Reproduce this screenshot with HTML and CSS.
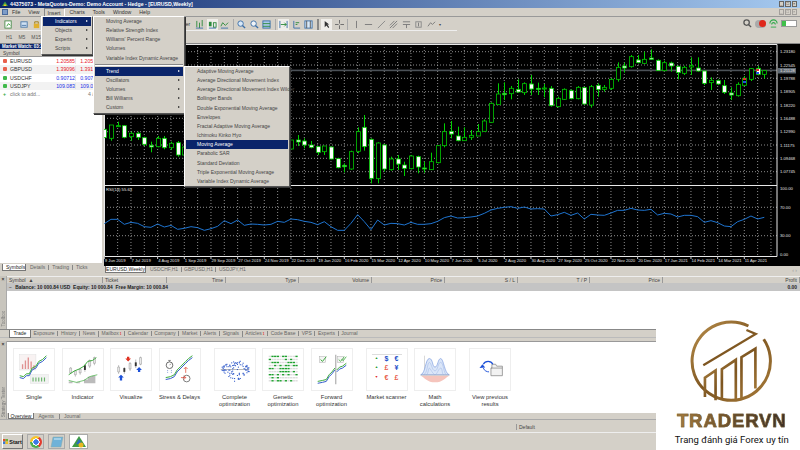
FILE: index.html
```html
<!DOCTYPE html>
<html lang="en">
<head>
    <meta charset="UTF-8">
    <meta name="viewport" content="width=device-width, initial-scale=1.0">
    <title>MetaQuotes-Demo</title>
    <link rel="stylesheet" href="styles.css">
</head>
<body>
    <div class="titlebar">
        <svg class="app-icon" viewBox="0 0 8 7"><path d="M0 6 4 0l4 6z" fill="#3f9a45"/><path d="M2 6 4 3l2 3z" fill="#f0c419"/></svg>
        <span class="title-text">44375073 - MetaQuotes-Demo: Demo Account - Hedge - [EURUSD,Weekly]</span>
        <div class="win-btns">
            <span class="win-btn">_</span><span class="win-btn">&#9633;</span><span class="win-btn">&times;</span>
        </div>
    </div>

    <div class="menubar">
        <span class="menu-logo"></span>
        <span class="menu-item m-file">File</span>
        <span class="menu-item">View</span>
        <span class="menu-item m-insert">Insert</span>
        <span class="menu-item">Charts</span>
        <span class="menu-item">Tools</span>
        <span class="menu-item">Window</span>
        <span class="menu-item">Help</span>
        <div class="win-btns faded">
            <span class="win-btn">_</span><span class="win-btn">&#9633;</span><span class="win-btn">&times;</span>
        </div>
    </div>

    <div class="toolbars">
        <div class="toolbar-row">
            <div class="tb-left">
                <svg class="tb-icon" viewBox="0 0 10 10"><rect x="1" y="1" width="7" height="8" fill="#fff" stroke="#4a8a4a"/><path d="M3 7 5 4l2 2" fill="none" stroke="#2a9a2a"/></svg>
                <svg class="tb-icon tb-icon-gap" viewBox="0 0 10 10"><rect x="1" y="2" width="7" height="6" fill="#cfe0f2" stroke="#4a78a8"/><path d="M2 6h5" stroke="#4a78a8"/></svg>
                <svg class="tb-icon" viewBox="0 0 10 10"><rect x="2" y="4" width="6" height="5" fill="#e0b030"/><path d="M3 4V2h4v2" fill="none" stroke="#a07a10"/></svg>
            </div>
            <span class="order-text">der</span>
            <div class="tb-group">
                <svg class="tb-icon" viewBox="0 0 10 10"><path d="M2 1v7M5 3v6M8 0v7" stroke="#2c8a3c"/><path d="M1 9h8" stroke="#3a6ea8"/></svg>
                <svg class="tb-icon on" viewBox="0 0 10 10"><rect x="1" y="2" width="3" height="5" fill="#2c8a3c"/><rect x="6" y="3" width="3" height="5" fill="#e8e8e8" stroke="#2c8a3c"/><path d="M1 9h8" stroke="#3a6ea8"/></svg>
                <svg class="tb-icon" viewBox="0 0 10 10"><path d="M1 7 3 3l3 3 3-3" fill="none" stroke="#2c8a3c"/><path d="M1 9h8" stroke="#3a6ea8"/></svg>
                <i class="tb-sep"></i>
                <svg class="tb-icon" viewBox="0 0 10 10"><circle cx="4" cy="4" r="3" fill="#d8e8f8" stroke="#3a6ea8"/><path d="m6 6 3 3" stroke="#3a6ea8" stroke-width="1.5"/></svg>
                <svg class="tb-icon" viewBox="0 0 10 10"><circle cx="4" cy="4" r="3" fill="#f0f4f8" stroke="#3a6ea8"/><path d="m6 6 3 3" stroke="#3a6ea8" stroke-width="1.5"/></svg>
                <svg class="tb-icon" viewBox="0 0 10 10"><rect x="1" y="1" width="8" height="8" fill="#a8c8e8" stroke="#3a6ea8"/><path d="M1 4h8M1 7h8" stroke="#2c8a3c"/></svg>
                <i class="tb-sep"></i>
                <svg class="tb-icon on" viewBox="0 0 10 10"><path d="M1 1v8M9 1v8" stroke="#3a6ea8"/><path d="M2 5h6M6 3l2 2-2 2" fill="none" stroke="#2c8a3c"/></svg>
                <svg class="tb-icon" viewBox="0 0 10 10"><path d="M2 1v8h7" fill="none" stroke="#3a6ea8"/><path d="M4 3h4M4 5h2" stroke="#2c8a3c"/></svg>
                <svg class="tb-icon" viewBox="0 0 10 10"><rect x="1" y="1" width="8" height="8" fill="#d8e8f8" stroke="#3a6ea8"/><path d="M3 1v8M7 1v8" stroke="#555"/></svg>
                <i class="tb-sep wide"></i>
                <svg class="tb-icon on" viewBox="0 0 10 10"><path d="M3 1v7l2-2 2 3 1-1-2-3h2z" fill="#333"/></svg>
                <svg class="tb-icon" viewBox="0 0 10 10"><path d="M5 0v4M5 6v4M0 5h4M6 5h4" stroke="#666"/></svg>
                <i class="tb-sep"></i>
                <svg class="tb-icon" viewBox="0 0 10 10"><path d="M5 1v8" stroke="#777"/></svg>
                <svg class="tb-icon" viewBox="0 0 10 10"><path d="M1 5h8" stroke="#777"/></svg>
                <svg class="tb-icon" viewBox="0 0 10 10"><path d="m1 9 8-8" stroke="#888"/></svg>
                <svg class="tb-icon" viewBox="0 0 10 10"><path d="m1 9 8-8M1 6l5-5M4 9l5-5" stroke="#777"/></svg>
                <svg class="tb-icon" viewBox="0 0 10 10"><path d="M1 2h8M1 5h8M5 5v4" stroke="#777"/></svg>
                <svg class="tb-icon" viewBox="0 0 10 10"><rect x="2" y="2" width="6" height="6" fill="none" stroke="#888"/><path d="M5 3v4" stroke="#777"/></svg>
                <svg class="tb-icon" viewBox="0 0 10 10"><path d="M1 7 4 3l2 2 3-3" fill="none" stroke="#777"/></svg>
                <span class="tb-drop">&#9662;</span>
            </div>
            <div class="tb-status">
                <svg class="tb-icon" viewBox="0 0 10 10"><circle cx="4" cy="4" r="3" fill="none" stroke="#555" stroke-width="1.4"/><path d="m6 6 3 3" stroke="#555" stroke-width="1.5"/></svg>
                <span class="bell"><i class="bell-badge"></i></span>
                <svg class="tb-icon" viewBox="0 0 10 10"><path d="M1 5a4 4 0 0 1 8 0M3 6a2 2 0 0 1 4 0" fill="none" stroke="#2faa4a" stroke-width="1.2"/><path d="M2 9h6" stroke="#2faa4a"/></svg>
                <span class="signal"><i class="signal-fill"></i></span>
            </div>
        </div>
        <div class="toolbar-row second">
            <span class="tf">H1</span><span class="tf">M5</span><span class="tf">M15</span>
        </div>
    </div>

    <div class="workspace">
        <aside class="market-watch">
            <div class="mw-title">Market Watch: 03:26:41</div>
            <div class="mw-head"><span>Symbol</span></div>
            <div class="mw-row"><i class="arrow down"></i><span class="mw-sym">EURUSD</span><span class="mw-bid red">1.20585</span><span class="mw-ask red">1.20593</span></div>
            <div class="mw-row alt"><i class="arrow down"></i><span class="mw-sym">GBPUSD</span><span class="mw-bid red">1.39096</span><span class="mw-ask red">1.39104</span></div>
            <div class="mw-row"><i class="arrow up"></i><span class="mw-sym">USDCHF</span><span class="mw-bid blue">0.90712</span><span class="mw-ask blue">0.90720</span></div>
            <div class="mw-row alt"><i class="arrow up"></i><span class="mw-sym">USDJPY</span><span class="mw-bid blue">109.083</span><span class="mw-ask blue">109.091</span></div>
            <div class="mw-row add"><span class="plus">+</span><span class="mw-sym">click to add...</span><span class="mw-count">4 / 7</span></div>
            <div class="mw-spacer"></div>
            <div class="tabs mw-tabs">
                <span class="tab active">Symbols</span><span class="tab">Details</span><span class="tab">Trading</span><span class="tab">Ticks</span>
            </div>
        </aside>

        <main class="chart-area">
            <svg id="chart" class="chart" viewBox="104 44 696 222"></svg>
            <div class="tabs chart-tabs">
                <span class="tab active">EURUSD,Weekly</span><span class="tab">USDCHF,H1</span><span class="tab">GBPUSD,H1</span><span class="tab">USDJPY,H1</span>
                <span class="scroll-arrows">&lsaquo; &rsaquo;</span>
            </div>
        </main>
    </div>

    <section class="terminal">
        <div class="gutter"><span class="gutter-x">&times;</span><span class="gutter-label">Toolbox</span></div>
        <div class="terminal-main">
            <div class="order-head">
                <span class="col-left">Symbol &nbsp;&#9650;</span><span class="col-left">Ticket</span><span>Time</span><span>Type</span><span>Volume</span><span>Price</span><span>S / L</span><span>T / P</span><span>Price</span><span>Profit</span>
            </div>
            <div class="balance-row">
                <span class="balance-text"><span class="collapse">&minus;</span> Balance: 10 000.84 USD&nbsp; Equity: 10 000.84&nbsp; Free Margin: 10 000.84</span>
                <span class="balance-profit">0.00</span>
            </div>
            <div class="order-body"></div>
        </div>
    </section>
    <div class="tabs terminal-tabs">
        <span class="tab active">Trade</span><span class="tab">Exposure</span><span class="tab">History</span><span class="tab">News</span><span class="tab">Mailbox<b class="tick">1</b></span><span class="tab">Calendar</span><span class="tab">Company</span><span class="tab">Market</span><span class="tab">Alerts</span><span class="tab">Signals</span><span class="tab">Articles<b class="tick">1</b></span><span class="tab">Code Base</span><span class="tab">VPS</span><span class="tab">Experts</span><span class="tab">Journal</span>
    </div>

    <section class="tester">
        <div class="gutter"><span class="gutter-x">&times;</span><span class="gutter-label">Strategy Tester</span></div>
        <div class="tester-main">
            <div class="tiles">
                <div class="tile">
                    <svg class="tile-card" viewBox="0 0 42 43">
                        <rect x="6" y="6" width="17" height="16" fill="#f8f2f2" stroke="#ddd" stroke-width=".5"/>
                        <path d="M9 21v-5M12 21v-9M15 21V9M18 21v-8M21 21v-4" stroke="#e09090" stroke-width="1.4"/>
                        <rect x="17" y="27" width="19" height="9" fill="#f2f2f2" stroke="#ddd" stroke-width=".5"/>
                        <path d="M20 34v-4M23 34v-4M26 34v-4M29 34v-4M32 34v-4" stroke="#6cb46c" stroke-width="1.2"/>
                        <path d="M6 30l4 1 3-3 3 0 3-6 4-2 3-5 4-2 4-4" fill="none" stroke="#2a55c8"/>
                        <path d="M6 28l4 1 3-3 3 0 3-6 4-2 3-5 4-2 4-4" fill="none" stroke="#35a835"/>
                    </svg>
                    <span class="tile-name">Single</span>
                </div>
                <div class="tile">
                    <svg class="tile-card" viewBox="0 0 42 43">
                        <path d="M8 19v7M13 22v7M18 20v7M23 16v8M28 11v9M33 8v9" stroke="#999" stroke-width=".6"/>
                        <path d="M7 20h2v5H7zM12 23h2v4h-2zM17 21h2v4h-2zM27 12h2v6h-2zM32 9h2v6h-2z" fill="#eee" stroke="#888" stroke-width=".5"/>
                        <rect x="22" y="17" width="2" height="5" fill="#333"/>
                        <path d="M6 27l6-4 5-2 5-3 4-5 5-1 4-3" fill="none" stroke="#35a835"/>
                        <path d="M6 34h4v2h4v-1h4v1h4l0-4h4v-3h4v-1h4v8H6z" fill="#bbb"/>
                        <path d="M6 33l8 2 8-2 6-4 8-2" fill="none" stroke="#35a835" stroke-width=".7"/>
                    </svg>
                    <span class="tile-name">Indicator</span>
                </div>
                <div class="tile">
                    <svg class="tile-card" viewBox="0 0 42 43">
                        <path d="M8 17v9M14 19v7M20 14v9M26 11v9M31 8v9" stroke="#888" stroke-width=".6"/>
                        <path d="M7 19h2v5H7zM19 15h2v6h-2zM30 9h2v7h-2z" fill="#eee" stroke="#888" stroke-width=".5"/>
                        <rect x="13" y="20" width="2" height="4" fill="#333"/><rect x="25" y="14" width="2" height="4" fill="#333"/>
                        <path d="m18 13-3-3h1.800V8h2.400v2H21z" fill="#e03020"/>
                        <path d="m11 27-3 3h1.800v3h2.400v-3H14zM30 19l-3 3h1.800v2h2.400v-2H33z" fill="#1c50d8" transform="translate(-.5 0)"/>
                    </svg>
                    <span class="tile-name">Visualize</span>
                </div>
                <div class="tile">
                    <svg class="tile-card" viewBox="0 0 42 43">
                        <circle cx="10" cy="17" r="3.500" fill="#fff" stroke="#666"/><path d="M10 12v1.500M8.500 12h3M10 17l1.500-1.500" stroke="#666" stroke-width=".7"/>
                        <path d="M8 22v3M12 22v3" stroke="#88a0d8" stroke-dasharray="1 1"/>
                        <path d="M6 32l5-1 4-2 3-5 4-4 5-5 3-3 4-3" fill="none" stroke="#2a55c8"/>
                        <path d="M6 30l5-1 4-2 3-5 4-4 5-5 3-3 4-3" fill="none" stroke="#35a835"/>
                        <path d="M27 19v6M25 21l2-2 2 2" fill="none" stroke="#e87060"/>
                        <circle cx="28" cy="31" r="3.500" fill="#fff" stroke="#777"/><path d="M22 30h5M25 28l2 2-2 2" fill="none" stroke="#e03020" stroke-width=".7"/>
                    </svg>
                    <span class="tile-name">Stress &amp; Delays</span>
                </div>
                <div class="tile wide">
                    <svg id="scatter" class="tile-card" viewBox="0 0 42 43"></svg>
                    <span class="tile-name">Complete<br>optimization</span>
                </div>
                <div class="tile">
                    <svg id="genetic" class="tile-card" viewBox="0 0 42 43"></svg>
                    <span class="tile-name">Genetic<br>optimization</span>
                </div>
                <div class="tile">
                    <svg class="tile-card" viewBox="0 0 42 43">
                        <rect x="8" y="8" width="6" height="6" fill="#f4f4f4" stroke="#aaa" stroke-width=".5"/><path d="m9 11 2 2 4-5" fill="none" stroke="#35a835"/>
                        <rect x="27" y="8" width="6" height="6" fill="#f4f4f4" stroke="#aaa" stroke-width=".5"/><path d="m28 11 2 2 4-5M31 11l2 1 3-4" fill="none" stroke="#35a835" stroke-width=".8"/>
                        <path d="M25 6v31" stroke="#999"/>
                        <path d="M6 36l5-1 4-1 3-5 3-3 3-4M26 24l3-3 3-1 4-3" fill="none" stroke="#2a55c8"/>
                        <path d="M6 34l5-1 4-1 3-5 3-3 3-4M26 22l3-3 3-1 4-3" fill="none" stroke="#35a835"/>
                    </svg>
                    <span class="tile-name">Forward<br>optimization</span>
                </div>
                <div class="tile wide">
                    <div class="tile-card scanner">
                        <span class="up">&#9650;</span><span class="cur-blue">$</span><span class="cur-blue">&euro;</span>
                        <span class="up">&#9650;</span><span class="cur-red">&pound;</span><span class="cur-blue">&yen;</span>
                        <span class="down">&#9660;</span><span class="cur-red">&euro;</span><span class="cur-red">&pound;</span>
                    </div>
                    <span class="tile-name">Market scanner</span>
                </div>
                <div class="tile">
                    <svg class="tile-card" viewBox="0 0 42 43">
                        <path d="M10 7v20" stroke="#bbb" stroke-width=".6"/>
                        <path d="M6 27c5-1 5-17 9-17s3 9 6 9 3-9 6-9 4 16 9 17z" fill="#dbe6f8" stroke="#7a9ade" stroke-width=".7"/>
                        <path d="M9 27c4-1 4-13 6-13s3 9 6 9 3-9 6-9 3 12 6 13M12 27c2-1 2-7 3-7s4 7 6 7 4-7 6-7 1 6 3 7" fill="none" stroke="#9ab2e6" stroke-width=".5"/>
                        <path d="M6 28h30c-4 2-7 7-15 7S10 30 6 28z" fill="#f5c4bc"/>
                        <path d="M6 27.500h30" stroke="#aaa" stroke-width=".6"/>
                    </svg>
                    <span class="tile-name">Math<br>calculations</span>
                </div>
                <div class="tile wide">
                    <svg class="tile-card" viewBox="0 0 42 43">
                        <path d="M22 20h12v-2h-6l-1-2h-4v4zM22 20v8h12v-8" fill="#f2f2f2" stroke="#888" stroke-width=".8"/>
                        <path d="M24 16c-2-4-8-4-10 0" fill="none" stroke="#1c50d8" stroke-width="1.200"/>
                        <path d="M14 20c1 3 4 4 6 4" fill="none" stroke="#1c50d8"/>
                        <path d="m10 20 3-4 3 3.500z" fill="#1c50d8"/>
                    </svg>
                    <span class="tile-name">View previous<br>results</span>
                </div>
            </div>
            <div class="tabs tester-tabs">
                <span class="tab active">Overview</span><span class="tab">Agents</span><span class="tab">Journal</span>
            </div>
        </div>
    </section>

    <div class="statusbar"><span class="status-cell">Default</span></div>

    <footer class="taskbar">
        <span class="start">
            <svg class="flag" viewBox="0 0 6 6"><path d="M0 0h3v3H0z" fill="#e0502a"/><path d="M3 0h3v3H3z" fill="#6cb03a"/><path d="M0 3h3v3H0z" fill="#3a7ad8"/><path d="M3 3h3v3H3z" fill="#f0c020"/></svg>
            Start
        </span>
        <span class="task"><i class="chrome"></i></span>
        <span class="task"><svg class="task-svg" viewBox="0 0 14 12"><path d="M3 1h10l-2 10H1z" fill="#6fb2d8" stroke="#8aa" stroke-width=".5"/><path d="M4 3h7" stroke="#d8eef8"/></svg></span>
        <span class="task current"><svg class="task-svg" viewBox="0 0 14 12"><path d="M7 0 14 11H0z" fill="#3f9a45"/><path d="M7 3l3 5H4z" fill="#2a6cc0"/><circle cx="9" cy="9" r="2.500" fill="#e8b820"/></svg></span>
    </footer>

    <div class="menu menu-insert">
        <div class="menu-row selected">Indicators<i class="caret"></i></div>
        <div class="menu-row">Objects<i class="caret"></i></div>
        <div class="menu-row">Experts<i class="caret"></i></div>
        <div class="menu-row">Scripts<i class="caret"></i></div>
    </div>
    <div class="menu menu-indicators">
        <div class="menu-row">Moving Average</div>
        <div class="menu-row">Relative Strength Index</div>
        <div class="menu-row">Williams' Percent Range</div>
        <div class="menu-row">Volumes</div>
        <div class="menu-row">Variable Index Dynamic Average</div>
        <hr class="menu-sep">
        <div class="menu-row selected">Trend<i class="caret"></i></div>
        <div class="menu-row">Oscillators<i class="caret"></i></div>
        <div class="menu-row">Volumes<i class="caret"></i></div>
        <div class="menu-row">Bill Williams<i class="caret"></i></div>
        <div class="menu-row">Custom<i class="caret"></i></div>
    </div>
    <div class="menu menu-trend">
        <div class="menu-row">Adaptive Moving Average</div>
        <div class="menu-row">Average Directional Movement Index</div>
        <div class="menu-row">Average Directional Movement Index Wilder</div>
        <div class="menu-row">Bollinger Bands</div>
        <div class="menu-row">Double Exponential Moving Average</div>
        <div class="menu-row">Envelopes</div>
        <div class="menu-row">Fractal Adaptive Moving Average</div>
        <div class="menu-row">Ichimoku Kinko Hyo</div>
        <div class="menu-row selected">Moving Average</div>
        <div class="menu-row">Parabolic SAR</div>
        <div class="menu-row">Standard Deviation</div>
        <div class="menu-row">Triple Exponential Moving Average</div>
        <div class="menu-row">Variable Index Dynamic Average</div>
    </div>

    <div class="brand">
        <svg class="brand-mark" viewBox="0 0 250 250">
            <defs>
                <linearGradient id="gold" x1="0" y1="0" x2="1" y2="1">
                    <stop offset="0" stop-color="#b98f4c"/>
                    <stop offset=".5" stop-color="#7d5520"/>
                    <stop offset="1" stop-color="#a87c3a"/>
                </linearGradient>
            </defs>
            <path d="M176 18A118 118 0 1 0 222 58" fill="none" stroke="url(#gold)" stroke-width="9"/>
            <path d="M40 136 198 42 170 30" fill="none" stroke="url(#gold)" stroke-width="7"/>
            <path d="M45 232v-58l32-22v90M96 240v-92l42-28v120M155 236V112l42-26v120" fill="none" stroke="url(#gold)" stroke-width="8"/>
        </svg>
        <div class="brand-name">TRADERVN</div>
        <div class="brand-tag">Trang đánh giá Forex uy tín</div>
    </div>

    <script src="chart.js"></script>
</body>
</html>
```

FILE: styles.css
```css
* {
    box-sizing: border-box;
}

body {
    font-family: "Liberation Sans", Arial, sans-serif;
    font-size: 5px;
    color: #444;
    background: #d4d0c8;
    width: 800px;
    height: 450px;
    margin: 0;
    position: relative;
    overflow: hidden;
}

/* window chrome */
.titlebar {
    height: 8px;
    display: flex;
    align-items: center;
    padding-left: 2px;
    background: linear-gradient(90deg, #0a246a, #a6caf0);
    color: #fff;
    font-weight: bold;
    font-size: 5.2px;
}

.app-icon {
    width: 6px;
    height: 6px;
    margin-right: 2px;
}

.title-text {
    flex: 1;
}

.win-btns {
    display: flex;
    gap: 1px;
    margin-right: 3px;
}

.win-btn {
    width: 5.5px;
    height: 6px;
    background: #d4d0c8;
    border: 1px solid #666;
    color: #222;
    font-size: 4px;
    line-height: 4px;
    text-align: center;
    font-weight: normal;
}

.win-btns.faded {
    margin-left: auto;
    opacity: .45;
}

.menubar {
    height: 9px;
    display: flex;
    align-items: center;
    border-bottom: 1px solid #999;
    font-size: 5.2px;
    color: #333;
}

.menu-logo {
    width: 6px;
    height: 6px;
    margin-left: 2px;
    background: #7d9cc8;
    border: 1px solid #4a6a9c;
}

.menu-item {
    margin-left: 8px;
}

.m-file {
    margin-left: 4px;
}

.m-insert {
    margin-left: 4px;
    margin-right: -3px;
    padding: 0 3px;
    height: 8px;
    line-height: 8px;
    border-top: 1px solid #888;
    border-left: 1px solid #888;
    border-right: 1px solid #fff;
}

.toolbars {
    height: 27px;
    border-bottom: 1px solid #888;
}

.toolbar-row {
    height: 14px;
    display: flex;
    align-items: center;
    position: relative;
    background: linear-gradient(#eee, #eee) left bottom / 457px 1px no-repeat;
}

.toolbar-row.second {
    height: 12px;
    padding-left: 6px;
    gap: 6px;
    background: none;
    color: #555;
}

.tb-left {
    display: flex;
    width: 183px;
    padding-left: 4px;
    gap: 3px;
}

.order-text {
    width: 12px;
    color: #333;
}

.tb-group {
    width: 262px;
    display: flex;
    align-items: center;
    gap: 3.5px;
}

.tb-icon {
    width: 9px;
    height: 9px;
    flex: none;
}

.tb-icon.on {
    background: #f0eeea;
    outline: 1.5px solid #f0eeea;
}

.tb-icon-gap {
    margin-left: 4px;
}

.tb-sep {
    width: 1px;
    height: 11px;
    background: #aaa;
}

.tb-sep.wide {
    width: 2px;
    background: #888;
}

.tb-drop {
    font-size: 4px;
}

.tb-status {
    position: absolute;
    right: 3px;
    top: 2px;
    display: flex;
    align-items: center;
    gap: 3px;
}

.bell {
    width: 11px;
    height: 8px;
    border-radius: 4px;
    background: #aaa;
    position: relative;
}

.bell-badge {
    position: absolute;
    right: 0;
    top: 0;
    width: 7px;
    height: 7px;
    border-radius: 50%;
    background: #e0281c;
}

.signal {
    width: 16px;
    height: 7px;
    background: #fff;
    border: 1px solid #999;
    display: block;
}

.signal-fill {
    display: block;
    width: 4px;
    height: 100%;
    background: #3fc04a;
}

/* market watch */
.workspace {
    height: 232px;
    display: flex;
}

.market-watch {
    width: 102px;
    margin-right: 2px;
    display: flex;
    flex-direction: column;
}

.mw-title {
    height: 5px;
    background: #0a246a;
    color: #fff;
    font-weight: bold;
    font-size: 4.5px;
    line-height: 5px;
    padding-left: 2px;
    flex: none;
}

.mw-head {
    height: 8px;
    line-height: 8px;
    background: #d4d0c8;
    padding-left: 3px;
    border-bottom: 1px solid #999;
    flex: none;
}

.mw-row {
    height: 8.3px;
    flex: none;
    display: flex;
    align-items: center;
    padding-left: 3px;
    font-size: 5.2px;
    color: #333;
    background: #fff;
}

.mw-row.alt {
    background: #f2f2f2;
}

.arrow {
    width: 4px;
    height: 4px;
    margin-right: 3px;
    border-radius: 1px;
}

.arrow.down {
    background: #e8604c;
}

.arrow.up {
    background: #3fb94a;
}

.plus {
    color: #2fa83a;
    font-weight: bold;
    width: 7px;
}

.mw-sym {
    width: 41px;
}

.mw-bid,
.mw-ask {
    width: 24px;
    text-align: right;
    overflow: hidden;
    white-space: nowrap;
}

.mw-ask {
    border-left: 1px solid #e4e4e4;
}

.red {
    color: #e8202a;
}

.blue {
    color: #1c30e8;
}

.add .mw-sym {
    color: #777;
    width: 78px;
}

.mw-count {
    color: #777;
}

.mw-spacer {
    flex: 1;
    background: #fff;
}

.tabs {
    display: flex;
    align-items: center;
    background: #d4d0c8;
    color: #666;
    white-space: nowrap;
}

.tab {
    padding: 0 3.5px;
    border-left: 1px solid #888;
    line-height: 5px;
}

.tab.active {
    background: #fff;
    color: #222;
    border: 1px solid #777;
    border-top: none;
    line-height: 6px;
}

.tab.active + .tab {
    border-left: none;
}

.mw-tabs {
    height: 9px;
    margin-bottom: 4px;
    padding: 0 1px 1px 2px;
    flex: none;
}

.mw-tabs .tab {
    padding: 0 3px;
}

.mw-tabs .tab.active {
    width: 24px;
    text-align: center;
}

.mw-tabs .tab.active + .tab {
    margin-left: 1px;
}

/* chart */
.chart-area {
    flex: 1;
    display: flex;
    flex-direction: column;
}

.chart {
    display: block;
    width: 696px;
    height: 222px;
    flex: none;
    background: #000;
}

.chart text {
    font-family: "Liberation Sans", Arial, sans-serif;
    font-size: 4.2px;
    fill: #e4e4e4;
}

.chart-tabs {
    height: 10px;
    padding-left: 1px;
    padding-bottom: 3px;
}

.chart-tabs .tab {
    padding: 0 2.5px;
}

.chart-tabs .tab.active {
    width: 41px;
    height: 7px;
    padding: 0;
    text-align: center;
}

.chart-tabs .tab.active + .tab {
    margin-left: 1.5px;
}

.scroll-arrows {
    margin-left: auto;
    margin-right: 3px;
    color: #999;
}

/* toolbox */
.terminal {
    height: 53px;
    display: flex;
}

.gutter {
    width: 7px;
    flex: none;
    position: relative;
    background: #c8c5bd;
    display: flex;
    flex-direction: column;
    align-items: center;
    border-right: 1px solid #aaa;
}

.gutter-x {
    font-size: 5px;
    font-weight: bold;
    color: #333;
    height: 7px;
}

.gutter-label {
    writing-mode: vertical-rl;
    transform: rotate(180deg);
    color: #777;
    font-size: 4.5px;
    margin-top: auto;
    margin-bottom: 2px;
}

.terminal-main {
    flex: 1;
    display: flex;
    flex-direction: column;
}

.order-head {
    display: grid;
    grid-template-columns: 96px 64px 59px 73px 73px 73px 73px 72px 73px 1fr;
    height: 7px;
    flex: none;
    line-height: 7px;
    border-top: 1px solid #eee;
}

.order-head span {
    text-align: right;
    padding: 0 2px;
    border-right: 1px solid #999;
}

.order-head .col-left {
    text-align: left;
}

.balance-row {
    height: 8px;
    flex: none;
    display: flex;
    justify-content: space-between;
    align-items: center;
    background: #c4c4c4;
    padding: 0 3px 0 2px;
    color: #222;
    font-weight: bold;
    font-size: 4.9px;
}

.collapse {
    color: #555;
    margin-right: 2px;
}

.order-body {
    flex: 1;
    background: #fff;
}

.terminal-tabs {
    height: 9px;
    padding-left: 9px;
    background: #d4d0c8;
    border-top: 1px solid #888;
    border-bottom: 1px solid #bbb;
    width: 800px;
}

.terminal-tabs .tab {
    padding: 0 2.65px;
}

.terminal-tabs .tab.active {
    padding: 0 3.5px;
    height: 8px;
}

.tick {
    color: #e02020;
    font-size: 3px;
    margin-left: 1px;
}

/* strategy tester */
.tester {
    height: 81px;
    display: flex;
    padding-top: 3px;
}

.tester-main {
    flex: 1;
    display: flex;
    flex-direction: column;
}

.tiles {
    flex: 1;
    display: flex;
    background: #fff;
    padding: 6px 0 0 6px;
    border-top: 1px solid #999;
}

.tile {
    width: 42px;
    margin-right: 6.5px;
    flex: none;
    text-align: center;
    color: #333;
    font-size: 5.8px;
}

.tile.wide {
    margin-left: 6.5px;
}

.tile-card {
    display: block;
    width: 42px;
    height: 43px;
    background: #fff;
    border: 1px solid #eee;
    margin-bottom: 3px;
}

.tile-name {
    display: block;
    line-height: 7px;
    margin: 0 -3px;
    white-space: nowrap;
}

.scanner {
    display: grid;
    grid-template-columns: repeat(3, 1fr);
    align-items: center;
    text-align: center;
    padding: 5px 5px 8px;
    font-size: 7px;
    font-weight: bold;
    line-height: 9px;
    background-image: linear-gradient(#ddd, #ddd);
    background-size: 30px 1px;
    background-position: 5px 5px;
    background-repeat: no-repeat;
}

.scanner .up {
    color: #1c9a30;
    font-size: 3.5px;
}

.scanner .down {
    color: #e02a2a;
    font-size: 3.5px;
}

.cur-blue {
    color: #1c50c8;
}

.cur-red {
    color: #e8604c;
}

.tester-tabs {
    height: 6px;
    flex: none;
    padding-left: 1px;
}

.tester-tabs .tab {
    padding: 0 4.5px;
}

.tester-tabs .tab.active {
    width: 26px;
    height: 6px;
    padding: 0;
    text-align: center;
}

.statusbar {
    height: 13px;
    padding-top: 2px;
    border-top: 1px solid #aaa;
    display: flex;
    align-items: center;
    color: #444;
}

.status-cell {
    margin-left: 516px;
    padding-left: 2px;
    border-left: 1px solid #999;
}

.taskbar {
    height: 18px;
    display: flex;
    align-items: center;
    padding-left: 2px;
    gap: 4px;
    border-top: 1px solid #eee;
}

.start {
    width: 21px;
    height: 15px;
    display: flex;
    align-items: center;
    justify-content: center;
    gap: 1px;
    font-weight: bold;
    font-size: 5.5px;
    color: #111;
    border: 1px solid #777;
    border-top-color: #fff;
    border-left-color: #fff;
}

.flag {
    width: 5px;
    height: 5px;
}

.task {
    width: 17px;
    height: 15px;
    display: flex;
    align-items: center;
    justify-content: center;
    background: #d4d0c8;
    border: 1px solid #aaa;
}

.task.current {
    width: 19px;
    background: #fff;
}

.chrome {
    width: 12px;
    height: 12px;
    border-radius: 50%;
    background: radial-gradient(circle, #3b78e7 0 2.5px, #fff 2.7px 3.5px, transparent 3.7px),
        conic-gradient(from 30deg, #e33b2e 0 120deg, #4caf50 120deg 240deg, #f7c52b 240deg);
}

.task-svg {
    width: 14px;
    height: 12px;
}

/* dropdown menus */
.menu {
    position: absolute;
    z-index: 5;
    background: #d4d0c8;
    border: 1px solid #fff;
    border-right-color: #555;
    border-bottom-color: #555;
    color: #444;
    padding: 0 1px;
    box-shadow: 1px 1px 0 #333;
}

.menu-row {
    height: 9.17px;
    line-height: 9.17px;
    padding-left: 11px;
    position: relative;
    white-space: nowrap;
}

.menu-row.selected {
    background: #0a246a;
    color: #fff;
}

.caret {
    position: absolute;
    right: 3px;
    top: 3px;
    border-left: 2.5px solid #222;
    border-top: 1.8px solid transparent;
    border-bottom: 1.8px solid transparent;
}

.menu-row.selected .caret {
    border-left-color: #fff;
}

.menu-sep {
    margin: 1px 0;
    border: none;
    border-top: 1px solid #888;
    border-bottom: 1px solid #fff;
}

.menu-insert {
    left: 41px;
    top: 16px;
    width: 52px;
}

.menu-insert .menu-row {
    padding-left: 12px;
}

.menu-indicators {
    left: 93px;
    top: 16px;
    width: 92px;
}

.menu-trend {
    left: 184px;
    top: 66px;
    width: 106px;
}

/* logo block over the bottom right */
.brand {
    position: absolute;
    z-index: 6;
    left: 656px;
    top: 320px;
    width: 144px;
    height: 130px;
    padding-left: 7.5px;
    background: #fff;
    display: flex;
    flex-direction: column;
    align-items: center;
}

.brand-mark {
    width: 83px;
    height: 83px;
    flex: none;
}

.brand-name {
    margin-top: 10px;
    font-size: 18.5px;
    font-weight: bold;
    letter-spacing: .9px;
    line-height: 15px;
    color: #6e5430;
    background: linear-gradient(90deg, #a67c3c, #5c4526 60%, #3a3024);
    -webkit-background-clip: text;
    background-clip: text;
    -webkit-text-fill-color: transparent;
    -webkit-text-stroke: .5px #7a5e36;
}

.brand-tag {
    margin-top: 6px;
    font-family: Roboto, "Liberation Sans", sans-serif;
    font-size: 9.5px;
    line-height: 11px;
    color: #111;
}
```

FILE: chart.js
```js
const NS = 'http://www.w3.org/2000/svg';
const chart = document.getElementById('chart');

function add(parent, tag, attrs, text) {
    const el = document.createElementNS(NS, tag);
    for (const key in attrs) el.setAttribute(key, attrs[key]);
    if (text) el.textContent = text;
    parent.appendChild(el);
    return el;
}

const STEP = 20 / 3;
const candleX = i => 104.3 + i * STEP;

// [wickTop, wickBottom, bodyTop, bodyBottom, filled], in px of the chart
const left = [
    [129, 138, 129.3, 137.7, 1], [125, 140.7, 125, 138.3, 0], [121.7, 126.7, 125.7, 126.5, 0],
    [125, 138.3, 125.7, 137.3, 1], [131.7, 140.7, 133.3, 136.7, 0], [131.7, 140, 133.3, 137.3, 1],
    [136.7, 146, 137.7, 144.3, 1], [141.7, 152.3, 145.3, 147, 1], [136, 147.3, 138.3, 146.7, 0],
    [136, 149.3, 138.3, 147.7, 1], [141.7, 150, 143.3, 147.7, 0], [141, 156.7, 142.7, 155, 1],
    [145, 156, 147, 155, 0]
];

// measured at 3x, y offset 40
const middle = [
    [300, 327, 300, 327, 0], [285, 318, 300, 306, 1], [295, 325, 303, 315, 1], [303, 325, 315, 322, 1],
    [318, 345, 320, 337, 1], [318, 345, 318, 335, 0], [320, 358, 321, 357, 1], [355, 385, 356, 383, 1],
    [370, 397, 376, 380, 1], [332, 389, 335, 387, 0], [262, 340, 275, 334, 0], [225, 332, 262, 320, 1],
    [295, 430, 298, 415, 1], [307, 430, 309, 416, 0], [313, 395, 315, 387, 1], [350, 392, 357, 389, 0],
    [345, 390, 357, 372, 1], [365, 408, 375, 385, 1], [345, 388, 348, 386, 0], [347, 400, 350, 381, 1],
    [365, 398, 384, 386, 1], [338, 390, 365, 389, 0], [315, 370, 317, 368, 0], [250, 322, 275, 317, 0],
    [243, 295, 274, 282, 1], [260, 304, 288, 302, 1], [262, 302, 292, 302, 0], [270, 300, 286, 292, 0],
    [252, 288, 275, 288, 0], [238, 275, 243, 274, 0], [187, 248, 190, 247, 0], [130, 194, 162, 194, 0],
    [127, 180, 160, 164, 1], [138, 178, 145, 161, 0], [118, 158, 148, 156, 1], [127, 165, 131, 158, 0],
    [105, 165, 132, 147, 1], [128, 165, 145, 147, 1]
].map(r => [40 + r[0] / 3, 40 + r[1] / 3, 40 + r[2] / 3, 40 + r[3] / 3, r[4]]);

// measured at 3x, y offset 0
const right = [
    [252, 292, 264, 266, 0], [258, 320, 265, 317, 1], [290, 322, 295, 320, 0], [265, 300, 268, 298, 0],
    [268, 298, 272, 296, 1], [258, 298, 262, 296, 0], [262, 314, 263, 312, 1], [255, 323, 260, 315, 0],
    [250, 290, 256, 269, 1], [255, 275, 262, 268, 0], [235, 270, 238, 265, 0], [187, 245, 202, 238, 0],
    [188, 218, 198, 204, 1], [165, 203, 170, 200, 0], [165, 190, 180, 188, 1], [155, 192, 178, 190, 0],
    [148, 180, 174, 178, 1], [178, 213, 181, 212, 1], [182, 214, 188, 212, 0], [185, 215, 189, 198, 1],
    [197, 238, 199, 218, 1], [197, 225, 202, 220, 0], [172, 225, 197, 201, 0], [172, 215, 204, 213, 1],
    [212, 255, 213, 250, 1], [232, 270, 241, 248, 0], [238, 255, 242, 252, 1], [240, 282, 257, 277, 1],
    [262, 300, 279, 285, 1], [247, 290, 253, 287, 0], [228, 258, 235, 256, 0], [204, 243, 206, 238, 0],
    [198, 226, 205, 223, 1], [210, 235, 212, 223, 0]
].map(r => [r[0] / 3, r[1] / 3, r[2] / 3, r[3] / 3, r[4]]);

const RSI_LEFT = [131, 118, 118, 133, 127, 130, 140, 142, 132, 141, 136, 148, 145, 140, 143, 151, 146, 139, 122, 131, 120, 136, 132, 133, 135, 133, 124, 127, 117, 119, 124, 127, 134, 125, 140, 151, 151, 130, 104, 125, 149, 120, 135, 130, 131, 135, 127, 133, 133, 131, 124, 113];
const RSI_RIGHT = [108, 114, 113, 111, 108, 100, 90, 85, 82, 80, 85, 81, 87, 86, 87, 108, 104, 97, 106, 99, 117, 103, 105, 106, 99, 91, 91, 85, 90, 91, 88, 105, 100, 102, 111, 106, 106, 110, 127, 122, 128, 138, 140, 125, 118, 108, 117, 112];

const DATES = ['9 Jun 2019', '7 Jul 2019', '4 Aug 2019', '1 Sep 2019', '29 Sep 2019', '27 Oct 2019', '24 Nov 2019', '22 Dec 2019', '19 Jan 2020', '16 Feb 2020', '15 Mar 2020', '12 Apr 2020', '10 May 2020', '7 Jun 2020', '5 Jul 2020', '2 Aug 2020', '30 Aug 2020', '27 Sep 2020', '25 Oct 2020', '22 Nov 2020', '20 Dec 2020', '17 Jan 2021', '14 Feb 2021', '14 Mar 2021', '11 Apr 2021'];
const PRICES = ['1.23180', '1.22545', '1.19788', '1.18905', '1.18220', '1.16488', '1.12990', '1.11175', '1.09468', '1.07745'];

function drawGrid() {
    const dotted = { stroke: '#b0b0b0', 'stroke-width': 0.8, 'stroke-dasharray': '1 2' };
    for (let x = 104.3; x < 777; x += 40 / 3) {
        add(chart, 'line', { x1: x, x2: x, y1: 44, y2: 256, ...dotted });
    }
    [51.7, 65, 78.3, 91.7, 105, 118.3, 131.7, 145, 158.3, 171.7, 207.3, 235.7].forEach(y => {
        add(chart, 'line', { x1: 104, x2: 779, y1: y, y2: y, ...dotted });
    });
    add(chart, 'rect', { x: 104, y: 69.6, width: 673, height: 1.6, fill: '#4b5157' });
    add(chart, 'path', { d: 'M104.500 44.500H777V256.500H104.500zM104 185.500H777', fill: 'none', stroke: '#e8e8e8', 'stroke-width': 1 });
}

function drawCandles() {
    [...left, ...Array(15).fill(null), ...middle, ...right].forEach((c, i) => {
        if (!c) return;
        const x = Math.round(candleX(i)) + 0.5;
        add(chart, 'line', { x1: x, x2: x, y1: c[0], y2: c[1], stroke: '#00d000' });
        add(chart, 'rect', {
            x: x - 2, y: c[2], width: 4, height: Math.max(c[3] - c[2], 1),
            fill: c[4] ? '#fff' : '#000', stroke: '#00c800', 'stroke-width': 0.8
        });
    });
    // trade marks on the last bars
    [[744.5, 78], [757.5, 69]].forEach(m => {
        add(chart, 'rect', { x: m[0] - 1.5, y: m[1], width: 3, height: 2, fill: '#e03030' });
        add(chart, 'rect', { x: m[0] - 1.5, y: m[1] + 3, width: 3, height: 2, fill: '#2050e0' });
    });
}

function drawRsi() {
    const pts = RSI_LEFT.map((y, i) => [candleX(i), 180 + y / 3]);
    RSI_RIGHT.forEach((y, i) => pts.push([candleX(52 + i), 180 + y / 3]));
    add(chart, 'polyline', {
        points: pts.map(p => p.join(',')).join(' '),
        fill: 'none', stroke: '#1e74d0', 'stroke-width': 1
    });
    add(chart, 'text', { x: 106, y: 191 }, 'RSI(14) 55.63');
}

function drawAxes() {
    const tops = [51.7, 65, 78.3, 91.7, 105, 118.3, 131.7, 145, 158.3, 171.7];
    PRICES.forEach((p, i) => add(chart, 'text', { x: 780, y: tops[i] + 1.7 }, p));
    add(chart, 'rect', { x: 778, y: 68, width: 18, height: 5.5, fill: '#5d6770' });
    add(chart, 'text', { x: 780, y: 72.4 }, '1.21128');
    [['100.00', 188], ['70.00', 207.3], ['30.00', 235.7], ['0.00', 254]].forEach(l => {
        add(chart, 'text', { x: 780, y: l[1] + 1.7 }, l[0]);
    });
    DATES.forEach((d, i) => {
        const x = candleX(i * 4);
        add(chart, 'line', { x1: x, x2: x, y1: 256, y2: 259, stroke: '#ccc' });
        add(chart, 'text', { x: x + 0.5, y: 262 }, d);
    });
}

// tile pictures that are just scattered dots
function drawScatter() {
    const svg = document.getElementById('scatter');
    add(svg, 'rect', { x: 6, y: 21, width: 30, height: 0.7, fill: '#999' });
    let seed = 7;
    for (let n = 0; n < 90; n++) {
        seed = (seed * 73 + 41) % 1009;
        const x = 7 + (seed % 29);
        const spread = 1 - Math.abs(x - 21) / 18;
        const y = 21 + ((seed * 7) % 27 - 13) * spread;
        add(svg, 'rect', { x, y, width: 1.1, height: 1.1, fill: '#2a55c8' });
    }
}

function drawGenetic() {
    const svg = document.getElementById('genetic');
    let seed = 11;
    for (let row = 0; row < 9; row++) {
        for (let col = 0; col < 11; col++) {
            seed = (seed * 61 + 17) % 997;
            const green = seed % 5 < 2;
            add(svg, 'rect', {
                x: 6 + col * 2.8, y: 7 + row * 3.2, width: 2.4, height: 1.5,
                fill: green ? '#20a030' : '#ddd'
            });
        }
    }
}

drawGrid();
drawCandles();
drawRsi();
drawAxes();
drawScatter();
drawGenetic();
```
